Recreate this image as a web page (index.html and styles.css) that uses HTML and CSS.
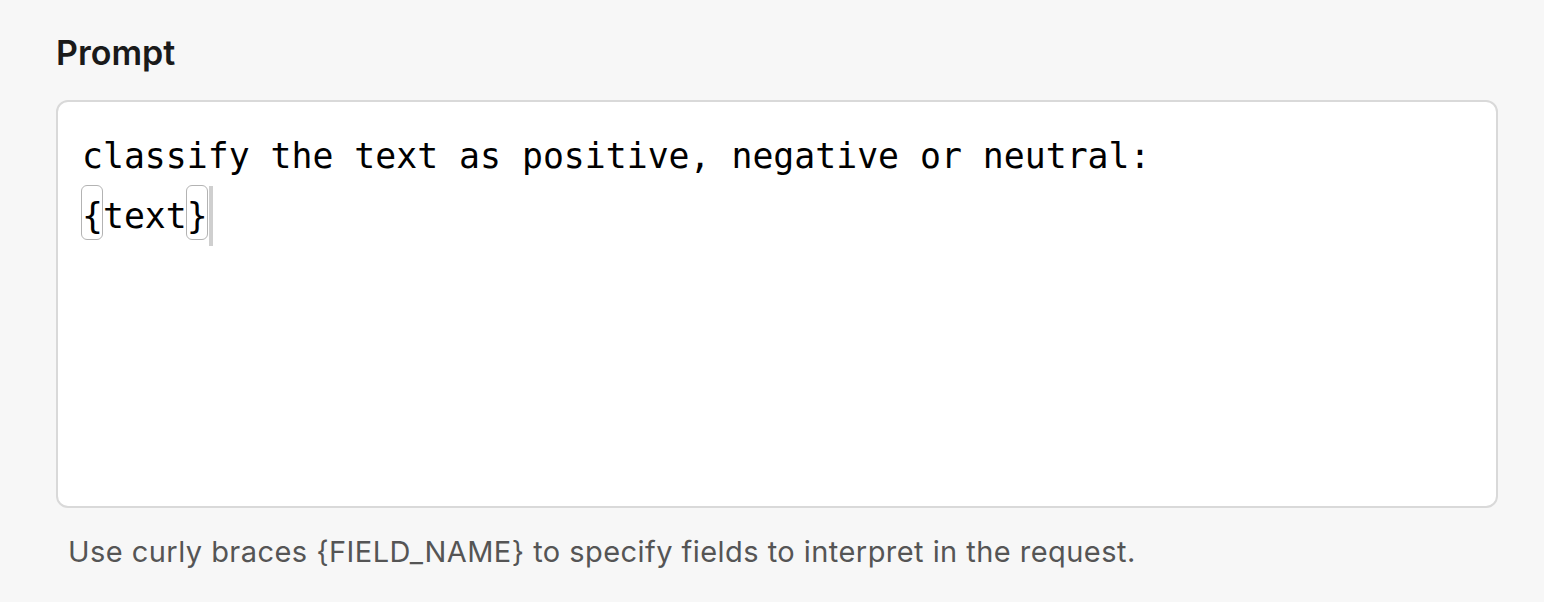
FILE: index.html
```html
<!DOCTYPE html>
<html lang="en">
<head>
<meta charset="utf-8">
<title>Prompt</title>
<link rel="stylesheet" href="styles.css">
</head>
<body>
<div class="field">
  <label class="field-label">Prompt</label>
  <div class="editor">
    <div class="line">classify the text as positive, negative or neutral:</div>
    <div class="line"><span class="brace">{</span>text<span class="brace">}</span><span class="caret"></span></div>
  </div>
  <p class="hint">Use curly braces {FIELD_NAME} to specify fields to interpret in the request.</p>
</div>
</body>
</html>
```
FILE: styles.css
```css
html, body {
  margin: 0;
  padding: 0;
  background: #f7f7f7;
}
body {
  font-family: Inter, "Liberation Sans", sans-serif;
}
.field {
  padding: 31px 46px 0 56px;
  display: flex;
  flex-direction: column;
}
.field-label {
  font-size: 34px;
  font-weight: 600;
  color: #1a1a1a;
  line-height: 44px;
  margin-bottom: 25px;
}
.editor {
  background: #ffffff;
  border: 2px solid #d9d9d9;
  border-radius: 12px;
  height: 408px;
  box-sizing: border-box;
  padding: 24px 24px;
  font-family: "DejaVu Sans Mono", "Liberation Mono", monospace;
  font-size: 34.8px;
  line-height: 60px;
  color: #000;
}
.line {
  white-space: pre;
}
.brace {
  position: relative;
}
.brace::before {
  content: "";
  position: absolute;
  left: -1px;
  right: 0;
  top: -11px;
  height: 55px;
  border: 1.5px solid #b3b3b3;
  border-radius: 6px;
  box-sizing: border-box;
}
.caret {
  display: inline-block;
  width: 4px;
  height: 60px;
  background: #cfcfcf;
  vertical-align: top;
  margin-left: 1px;
}
.hint {
  margin: 26px 0 0 12px;
  font-size: 29px;
  letter-spacing: 0.45px;
  color: #555555;
  line-height: 36px;
}
```
